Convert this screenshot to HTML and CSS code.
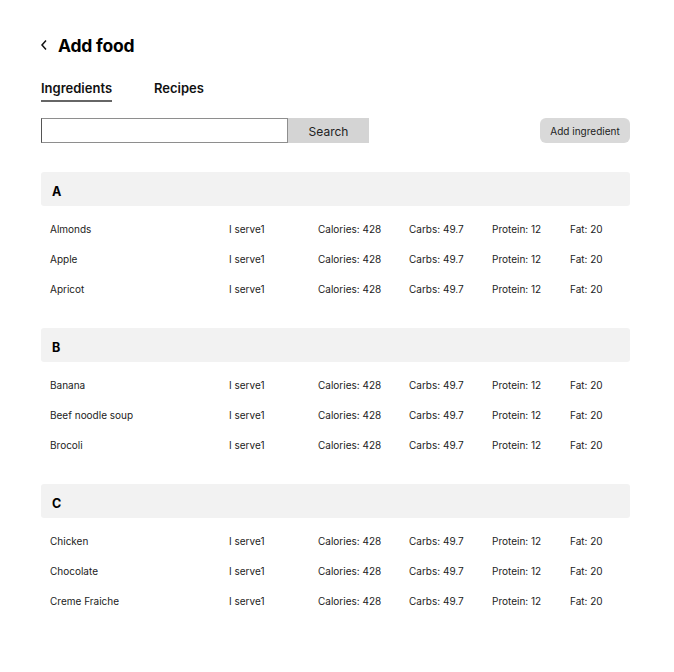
FILE: index.html
```html
<!DOCTYPE html>
<html>
<head>
<meta charset="utf-8">
<link rel="stylesheet" href="styles.css">
</head>
<body>
<div class="page">
  <div class="title-row">
    <svg class="back" width="8" height="12" viewBox="0 0 8 12"><path d="M6 1.5 L2 6 L6 10.5" fill="none" stroke="#111" stroke-width="1.5"/></svg>
    <h1>Add food</h1>
  </div>
  <div class="tabs">
    <div class="tab active">Ingredients</div>
    <div class="tab">Recipes</div>
  </div>
  <div class="toolbar">
    <div class="search">
      <input class="search-input" type="text">
      <button class="search-btn">Search</button>
    </div>
    <button class="add-btn">Add ingredient</button>
  </div>

  <div class="section">
    <div class="section-head">A</div>
    <div class="row"><span class="c-name">Almonds</span><span class="c-serve">I serve1</span><span class="c-cal">Calories: 428</span><span class="c-carb">Carbs: 49.7</span><span class="c-prot">Protein: 12</span><span class="c-fat">Fat: 20</span></div>
    <div class="row"><span class="c-name">Apple</span><span class="c-serve">I serve1</span><span class="c-cal">Calories: 428</span><span class="c-carb">Carbs: 49.7</span><span class="c-prot">Protein: 12</span><span class="c-fat">Fat: 20</span></div>
    <div class="row"><span class="c-name">Apricot</span><span class="c-serve">I serve1</span><span class="c-cal">Calories: 428</span><span class="c-carb">Carbs: 49.7</span><span class="c-prot">Protein: 12</span><span class="c-fat">Fat: 20</span></div>
  </div>

  <div class="section">
    <div class="section-head">B</div>
    <div class="row"><span class="c-name">Banana</span><span class="c-serve">I serve1</span><span class="c-cal">Calories: 428</span><span class="c-carb">Carbs: 49.7</span><span class="c-prot">Protein: 12</span><span class="c-fat">Fat: 20</span></div>
    <div class="row"><span class="c-name">Beef noodle soup</span><span class="c-serve">I serve1</span><span class="c-cal">Calories: 428</span><span class="c-carb">Carbs: 49.7</span><span class="c-prot">Protein: 12</span><span class="c-fat">Fat: 20</span></div>
    <div class="row"><span class="c-name">Brocoli</span><span class="c-serve">I serve1</span><span class="c-cal">Calories: 428</span><span class="c-carb">Carbs: 49.7</span><span class="c-prot">Protein: 12</span><span class="c-fat">Fat: 20</span></div>
  </div>

  <div class="section">
    <div class="section-head">C</div>
    <div class="row"><span class="c-name">Chicken</span><span class="c-serve">I serve1</span><span class="c-cal">Calories: 428</span><span class="c-carb">Carbs: 49.7</span><span class="c-prot">Protein: 12</span><span class="c-fat">Fat: 20</span></div>
    <div class="row"><span class="c-name">Chocolate</span><span class="c-serve">I serve1</span><span class="c-cal">Calories: 428</span><span class="c-carb">Carbs: 49.7</span><span class="c-prot">Protein: 12</span><span class="c-fat">Fat: 20</span></div>
    <div class="row"><span class="c-name">Creme Fraiche</span><span class="c-serve">I serve1</span><span class="c-cal">Calories: 428</span><span class="c-carb">Carbs: 49.7</span><span class="c-prot">Protein: 12</span><span class="c-fat">Fat: 20</span></div>
  </div>
</div>
</body>
</html>
```

FILE: styles.css
```css
* { box-sizing: border-box; }
html, body { margin: 0; padding: 0; background: #fff; }
body { font-family: Inter, "Noto Sans", sans-serif; color: #111; }
.page { width: 674px; padding: 33px 44px 0 41px; }

.title-row { display: flex; align-items: center; height: 24px; }
.back { margin-left: -1px; margin-right: 10px; display: block; }
h1 { margin: 0; font-size: 17.5px; font-weight: 700; letter-spacing: -0.2px; color: #000; }

.tabs { display: flex; gap: 42px; margin-top: 22px; height: 23px; }
.tab { font-size: 13px; font-weight: 600; color: #111; height: 23px; line-height: 18px; }
.tab.active { border-bottom: 2px solid #666; }

.toolbar { display: flex; justify-content: space-between; align-items: center; margin-top: 16px; }
.search { display: flex; }
.search-input { width: 247px; height: 25px; margin: 0; border: 1px solid #8e8e8e; border-left-color: #555; border-radius: 0; padding: 0 4px; background: #fff; outline: none; }
.search-btn { width: 81px; height: 25px; margin: 0; border: none; background: #d4d4d4; font-family: Inter, sans-serif; font-size: 12px; color: #222; padding: 2px 0 0 0; }
.add-btn { width: 90px; height: 25px; border: none; border-radius: 6px; background: #d9d9d9; font-family: Inter, sans-serif; font-size: 10px; color: #222; padding: 0; }

.section { margin-top: 29px; }
.section + .section { margin-top: 24px; }
.section-head { height: 34px; background: #f2f2f2; border-radius: 3px; padding: 5px 11px 0; display: flex; align-items: center; font-size: 12.5px; font-weight: 700; color: #000; }
.row { display: flex; align-items: center; height: 30px; font-size: 10px; color: #222; padding-left: 9px; }
.section-head + .row { margin-top: 8px; }
.row span { white-space: nowrap; }
.c-name { width: 179px; }
.c-serve { width: 89px; }
.c-cal { width: 91px; }
.c-carb { width: 83px; }
.c-prot { width: 78px; }
```
